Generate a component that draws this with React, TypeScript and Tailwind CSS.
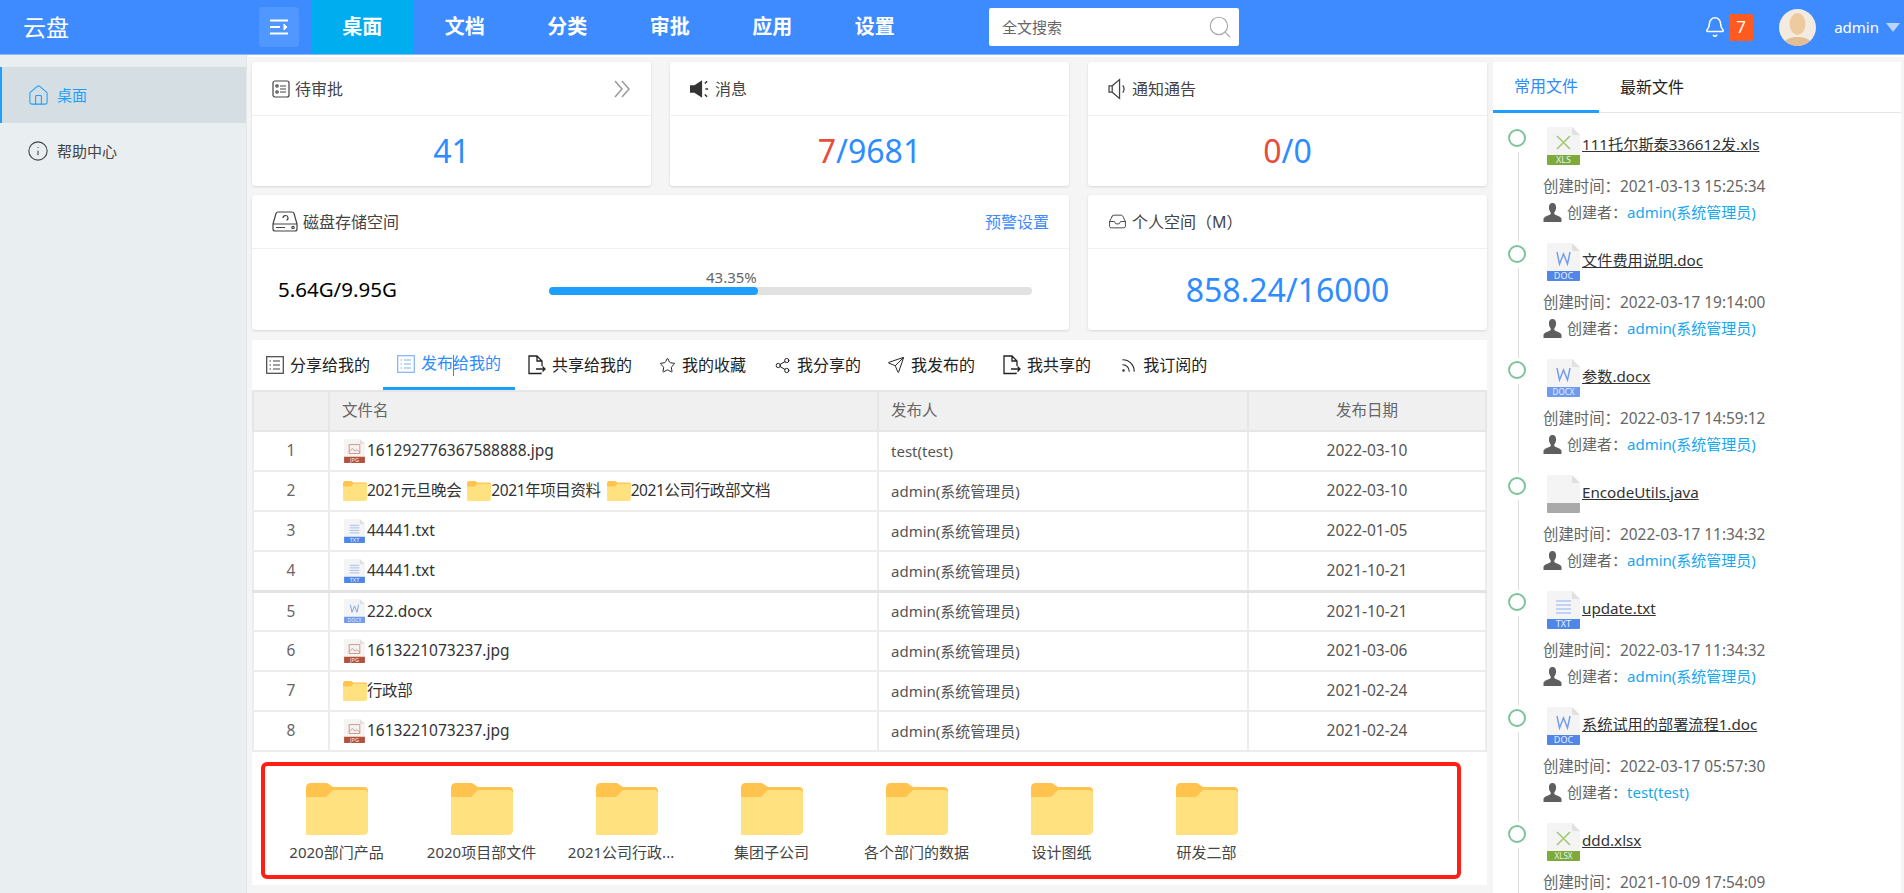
import { Bell, Home, Inbox, Info, Rss, Search, Send, Share2, Star } from 'lucide-react';

function ListIcon({ className = '' }: { className?: string }) {
  return (
    <svg viewBox="0 0 18 18" className={`w-[18px] h-[18px] shrink-0 ${className}`} fill="none" stroke="currentColor">
      <rect x="0.7" y="0.7" width="16.6" height="16.6" strokeWidth="1.2" />
      <path d="M7 5h7M7 9h7M7 13h7M3.500 5h1.500M3.500 9h1.500M3.500 13h1.500" strokeWidth="1.1" />
    </svg>
  );
}

function ExportIcon() {
  return (
    <svg viewBox="0 0 18 20" className="w-[18px] h-[20px] shrink-0" fill="none" stroke="currentColor" strokeWidth="1.3">
      <path d="M13 17.500v1H1V1h8l5 5v5M9 1v5h5M8 14h9M14.500 11.500 17 14l-2.500 2.500" />
    </svg>
  );
}

function ApprovalIcon() {
  return (
    <svg viewBox="0 0 18 18" className="w-[18px] h-[18px] shrink-0" fill="none" stroke="#444" strokeWidth="1.2">
      <rect x="1" y="1" width="16" height="16" rx="2" />
      <circle cx="5" cy="6" r="1.200" />
      <circle cx="5" cy="12" r="1.200" />
      <path d="M8 6h6M8 12h6M8 9h6" />
    </svg>
  );
}

function SpeakerFilled() {
  return (
    <svg viewBox="0 0 20 18" className="w-[22px] h-[20px] -mr-[2px] shrink-0" fill="#333">
      <path d="M0 5.500h4L11 1v16l-7-4.500H0z" />
      <path d="M13.500 4l2-2M13.500 14l2 2M14 9h2.500" stroke="#333" strokeWidth="1.400" />
    </svg>
  );
}

function SpeakerOutline() {
  return (
    <svg viewBox="0 0 20 20" className="w-[21px] h-[22px] -mr-[2px] shrink-0" fill="none" stroke="#444" strokeWidth="1.200">
      <path d="M1 7h3l7-6v18l-7-6H1zM4 7v6M14 6.500c1.500 2 1.500 5 0 7" />
    </svg>
  );
}

function DiskIcon() {
  return (
    <svg viewBox="0 0 26 21" className="w-[26px] h-[21px] shrink-0" fill="none" stroke="#444" strokeWidth="1.200">
      <path d="M1 13 4 2.500Q4.500 1 6 1h14q1.500 0 2 1.500L25 13M1 13v5q0 2 2 2h20q2 0 2-2v-5z" />
      <path d="M11 7a2.500 2.500 0 1 1 3.500 2.300M4 16.500h9" />
      <circle cx="21" cy="16.500" r="1.200" />
    </svg>
  );
}

function UserIcon() {
  return (
    <svg viewBox="0 0 19 19" className="w-[19px] h-[19px] shrink-0" fill="#5f5f5f">
      <path d="M9.500 0c2.500 0 3.600 2 3.600 4.500 0 2-.8 3.700-1.600 4.700-.5.700-.3 1.800.4 2.300 1.500 1 6.600 2 6.600 4.500V19H.500v-2.900c0-2.500 5.100-3.500 6.600-4.500.7-.5.900-1.600.4-2.300-.8-1-1.600-2.700-1.600-4.700C5.900 2 7 0 9.500 0z" />
    </svg>
  );
}

function Folder({ className }: { className: string }) {
  return (
    <svg viewBox="0 0 62 52" className={`shrink-0 ${className}`}>
      <path d="M0 5Q0 0 5 0H21L27 4H58Q62 4 62 8V20H0z" fill="#ffc34e" />
      <path d="M0 14H20L27 7H58Q62 7 62 11V47Q62 52 57 52H0z" fill="#ffe27f" />
    </svg>
  );
}

type FileKind = 'xls' | 'xlsx' | 'doc' | 'docx' | 'txt' | 'jpg' | 'java';

const bandColor: Record<FileKind, string> = {
  xls: '#7cab3b',
  xlsx: '#7cab3b',
  doc: '#5285e5',
  docx: '#6f9bee',
  txt: '#4f87e8',
  jpg: '#b5513c',
  java: '#aaaaaa',
};

function FileIcon({ kind, className }: { kind: FileKind; className: string }) {
  return (
    <svg viewBox="0 0 33 38" className={`shrink-0 ${className}`}>
      <path d="M1 0H25L33 8V37Q33 38 32 38H1Q0 38 0 37V1Q0 0 1 0z" fill="#f4f4f4" />
      <path d="M25 0L33 8H26Q25 8 25 7z" fill="#e0e0e0" />
      <path d="M0 28H33V37Q33 38 32 38H1Q0 38 0 37z" fill={bandColor[kind]} />
      {(kind === 'xls' || kind === 'xlsx') && <path d="M10 9l13 13M23 9 10 22" stroke="#a3c974" strokeWidth="1.600" />}
      {(kind === 'doc' || kind === 'docx') && <path d="M10 9l2.500 12L16.500 11l4 10L23 9" stroke="#6f9bee" strokeWidth="1.400" fill="none" />}
      {kind === 'txt' && <path d="M9 10h15M9 14h15M9 18h15M9 22h15" stroke="#8fb0ee" strokeWidth="1.200" />}
      {kind === 'jpg' && (
        <g fill="none" stroke="#d07a66" strokeWidth="1.200">
          <rect x="8" y="9" width="17" height="14" />
          <path d="M8 20l5-5 4 4 3-2 5 4" />
        </g>
      )}
      {kind !== 'java' && (
        <text x="16.500" y="36" textAnchor="middle" fontSize={kind === 'docx' || kind === 'xlsx' ? 8 : 9} fill="#e9eef7" fontFamily="Noto Sans">
          {kind.toUpperCase()}
        </text>
      )}
    </svg>
  );
}

const navItems = ['桌面', '文档', '分类', '审批', '应用', '设置'];

const tabs = [
  { label: '我的收藏', cls: 'pl-[14px] pr-[14px]', icon: <Star className="w-[17px] h-[17px]" strokeWidth={1.4} /> },
  { label: '我分享的', cls: 'pl-[14px] pr-[13px]', icon: <Share2 className="w-[17px] h-[17px]" strokeWidth={1.4} /> },
  { label: '我发布的', cls: 'pl-[13px] pr-[14px]', icon: <Send className="w-[18px] h-[18px]" strokeWidth={1.300} /> },
  { label: '我共享的', cls: 'pl-[14px] pr-[15px]', icon: <ExportIcon /> },
  { label: '我订阅的', cls: 'pl-[14px] pr-[13px]', icon: <Rss className="w-[17px] h-[17px]" strokeWidth={1.500} /> },
];

const rows: { no: number; files: { name: string; kind: FileKind | 'folder' }[]; who: string; date: string }[] = [
  { no: 1, files: [{ name: '161292776367588888.jpg', kind: 'jpg' }], who: 'test(test)', date: '2022-03-10' },
  {
    no: 2,
    files: [
      { name: '2021元旦晚会', kind: 'folder' },
      { name: '2021年项目资料', kind: 'folder' },
      { name: '2021公司行政部文档', kind: 'folder' },
    ],
    who: 'admin(系统管理员)',
    date: '2022-03-10',
  },
  { no: 3, files: [{ name: '44441.txt', kind: 'txt' }], who: 'admin(系统管理员)', date: '2022-01-05' },
  { no: 4, files: [{ name: '44441.txt', kind: 'txt' }], who: 'admin(系统管理员)', date: '2021-10-21' },
  { no: 5, files: [{ name: '222.docx', kind: 'docx' }], who: 'admin(系统管理员)', date: '2021-10-21' },
  { no: 6, files: [{ name: '1613221073237.jpg', kind: 'jpg' }], who: 'admin(系统管理员)', date: '2021-03-06' },
  { no: 7, files: [{ name: '行政部', kind: 'folder' }], who: 'admin(系统管理员)', date: '2021-02-24' },
  { no: 8, files: [{ name: '1613221073237.jpg', kind: 'jpg' }], who: 'admin(系统管理员)', date: '2021-02-24' },
];

const folders = ['2020部门产品', '2020项目部文件', '2021公司行政...', '集团子公司', '各个部门的数据', '设计图纸', '研发二部'];

const timeline: { name: string; kind: FileKind; time: string; who: string }[] = [
  { name: '111托尔斯泰336612发.xls', kind: 'xls', time: '2021-03-13 15:25:34', who: 'admin(系统管理员)' },
  { name: '文件费用说明.doc', kind: 'doc', time: '2022-03-17 19:14:00', who: 'admin(系统管理员)' },
  { name: '参数.docx', kind: 'docx', time: '2022-03-17 14:59:12', who: 'admin(系统管理员)' },
  { name: 'EncodeUtils.java', kind: 'java', time: '2022-03-17 11:34:32', who: 'admin(系统管理员)' },
  { name: 'update.txt', kind: 'txt', time: '2022-03-17 11:34:32', who: 'admin(系统管理员)' },
  { name: '系统试用的部署流程1.doc', kind: 'doc', time: '2022-03-17 05:57:30', who: 'test(test)' },
  { name: 'ddd.xlsx', kind: 'xlsx', time: '2021-10-09 17:54:09', who: 'admin(系统管理员)' },
];

function CardHead({ icon, title, right }: { icon: React.ReactNode; title: string; right?: React.ReactNode }) {
  return (
    <div className="h-[54px] flex items-center gap-[5px] px-[20px] border-b border-[#f0f0f0] text-[16px] text-[#444]">
      {icon}
      <span>{title}</span>
      {right && <div className="ml-auto">{right}</div>}
    </div>
  );
}

export default function App() {
  return (
    <div className="h-screen overflow-hidden flex flex-col bg-[#f5f5f5] font-['Noto_Sans','Noto_Sans_CJK_SC',sans-serif]">
      <header className="h-[55px] shrink-0 flex items-center bg-[#3d8bff] border-b border-[#8ab8ff] text-white">
        <div className="w-[259px] pl-[23px] text-[23px]">云盘</div>
        <button className="w-[40px] h-[40px] rounded bg-white/10 flex items-center justify-center">
          <svg viewBox="0 0 18 16" className="w-[18px] h-[16px]" stroke="white" strokeWidth="2.200" fill="none">
            <path d="M0 1.500h18M0 8h10M0 14.500h18" />
            <path d="M14 5l3 3-3 3z" fill="white" strokeWidth="1" />
          </svg>
        </button>
        <nav className="ml-[12px] flex h-full">
          {navItems.map((item, i) => (
            <a key={item} className={`w-[102.500px] flex items-center justify-center text-[20px] font-bold ${i === 0 ? 'bg-[#00aeef]' : ''}`}>
              {item}
            </a>
          ))}
        </nav>
        <div className="ml-[63px] w-[250px] h-[38px] bg-white rounded-[2px] flex items-center pl-[13px] pr-[6px] text-[15px] text-[#666]">
          <span>全文搜索</span>
          <Search className="ml-auto w-[26px] h-[26px] text-[#aaa]" strokeWidth={1.100} />
        </div>
        <div className="ml-auto flex items-center pr-[4px]">
          <Bell className="w-[22px] h-[26px]" strokeWidth={1.700} />
          <span className="ml-[3px] w-[24px] h-[27px] rounded-[2px] bg-[#ff5a1f] flex items-center justify-center text-[17px]">7</span>
          <svg viewBox="0 0 37 37" className="ml-[26px] w-[37px] h-[37px]">
            <clipPath id="avatar-clip">
              <circle cx="18.500" cy="18.500" r="18.500" />
            </clipPath>
            <g clipPath="url(#avatar-clip)">
              <rect width="37" height="37" fill="#f3ebe0" />
              <ellipse cx="18.500" cy="15" rx="8" ry="11" fill="#eecb9f" />
              <path d="M4 37c0-7 8-9 14.500-9S33 30 33 37z" fill="#e3bd94" />
            </g>
          </svg>
          <span className="ml-[18px] text-[15px]">admin</span>
          <span className="ml-[7px] w-0 h-0 border-x-[7px] border-x-transparent border-t-[9px] border-t-[#b9d5ff]" />
        </div>
      </header>

      <div className="flex-1 flex min-h-0">
        <aside className="w-[247px] shrink-0 bg-[#e9eef0] pt-[12px] border-r border-[#e2e6e8] text-[15px]">
          <a className="h-[56px] flex items-center gap-[7px] pl-[25px] bg-[#d5dfe3] border-l-2 border-[#1e9fff] text-[#1e9fff]">
            <Home className="w-[23px] h-[23px]" strokeWidth={1.100} />
            <span>桌面</span>
          </a>
          <a className="h-[56px] flex items-center gap-[8px] pl-[27px] text-[#444]">
            <Info className="w-[22px] h-[22px]" strokeWidth={1.200} />
            <span>帮助中心</span>
          </a>
        </aside>

        <main className="flex-1 min-w-0 flex border-t-2 border-white pt-[5px] pl-[5px] pr-[3px]">
          <div className="w-[1235px] shrink-0">
            <section className="grid grid-cols-3 gap-x-[19px] gap-y-[9px]">
              <div className="h-[124px] bg-white rounded-[3px] shadow-sm">
                <CardHead
                  icon={<ApprovalIcon />}
                  title="待审批"
                  right={
                    <svg viewBox="0 0 17 18" className="w-[17px] h-[18px] mr-[0px]" fill="none" stroke="#999" strokeWidth="1.500">
                      <path d="M1 1l7 8-7 8M8 1l7 8-7 8" />
                    </svg>
                  }
                />
                <div className="h-[70px] flex items-center justify-center text-[32px] text-[#2d8cff]">41</div>
              </div>
              <div className="h-[124px] bg-white rounded-[3px] shadow-sm">
                <CardHead icon={<SpeakerFilled />} title="消息" />
                <div className="h-[70px] flex items-center justify-center text-[32px] text-[#2d8cff]">
                  <span className="text-[#e74c3c]">7</span>/9681
                </div>
              </div>
              <div className="h-[124px] bg-white rounded-[3px] shadow-sm">
                <CardHead icon={<SpeakerOutline />} title="通知通告" />
                <div className="h-[70px] flex items-center justify-center text-[32px] text-[#2d8cff]">
                  <span className="text-[#e74c3c]">0</span>/0
                </div>
              </div>
              <div className="col-span-2 h-[135px] bg-white rounded-[3px] shadow-sm">
                <CardHead icon={<DiskIcon />} title="磁盘存储空间" right={<a className="text-[#3d8bff]">预警设置</a>} />
                <div className="h-[81px] flex items-center pl-[26px]">
                  <div className="w-[271px] text-[20.500px] text-black">5.64G/9.95G</div>
                  <div className="w-[483px] pb-[18px]">
                    <div className="pl-[157px] text-[15px] leading-[20px] text-[#666]">43.35%</div>
                    <div className="h-[8px] rounded-full bg-[#e2e2e2]">
                      <div className="h-full rounded-full bg-[#1e9fff]" style={{ width: '43.35%' }} />
                    </div>
                  </div>
                </div>
              </div>
              <div className="h-[135px] bg-white rounded-[3px] shadow-sm">
                <CardHead icon={<Inbox className="w-[19px] h-[19px] text-[#444]" strokeWidth={1.200} />} title="个人空间（M）" />
                <div className="h-[81px] flex items-center justify-center text-[32px] text-[#2d8cff]">858.24/16000</div>
              </div>
            </section>

            <section className="mt-[10px] bg-white h-[545px]">
              <div className="h-[50px] flex text-[16px] text-[#222]">
                <a className="pl-[14px] pr-[13px] flex items-center gap-[6px]">
                  <ListIcon className="text-[#444]" />
                  <span>分享给我的</span>
                </a>
                <a className="px-[14px] flex items-center gap-[6px] border-b-[3px] border-[#1e9fff] text-[#2d8cff]">
                  <ListIcon className="text-[#7fb2f5]" />
                  <span>
                    发布<i className="inline-block w-px h-[21px] -mr-px align-middle bg-[#2d8cff]" />给我的
                  </span>
                </a>
                <a className="px-[13px] flex items-center gap-[6px]">
                  <ExportIcon />
                  <span>共享给我的</span>
                </a>
                {tabs.map((tab) => (
                  <a key={tab.label} className={`${tab.cls} flex items-center gap-[6px]`}>
                    {tab.icon}
                    <span>{tab.label}</span>
                  </a>
                ))}
              </div>
              <table className="w-full table-fixed border-collapse text-[15.500px]">
                <colgroup>
                  <col className="w-[76px]" />
                  <col className="w-[549px]" />
                  <col className="w-[370px]" />
                  <col />
                </colgroup>
                <thead>
                  <tr className="h-[40px] bg-[#f0f0f0] text-[#666]">
                    <th className="border-2 border-[#e6e6e6] font-normal" />
                    <th className="border-2 border-[#e6e6e6] font-normal text-left pl-[12px]">文件名</th>
                    <th className="border-2 border-[#e6e6e6] font-normal text-left pl-[12px]">发布人</th>
                    <th className="border-2 border-[#e6e6e6] font-normal">发布日期</th>
                  </tr>
                </thead>
                <tbody>
                  {rows.map((row) => (
                    <tr key={row.no} className={`h-[40px] ${row.no === 4 ? 'border-b-[3px] border-[#e3e3e3]' : ''}`}>
                      <td className="border-2 border-[#ececec] text-center text-[#666]">{row.no}</td>
                      <td className="border-2 border-[#ececec] pl-[13px] text-[#333]">
                        <div className="flex items-center gap-[6px]">
                          {row.files.map((file) => (
                            <div key={file.name} className="flex items-center">
                              {file.kind === 'folder' ? (
                                <Folder className="w-[24px] h-[20px]" />
                              ) : (
                                <FileIcon kind={file.kind} className="w-[21px] h-[24px] ml-[1px] mr-[2px]" />
                              )}
                              <span className={file.kind === 'folder' ? 'tracking-[-0.4px]' : ''}>{file.name}</span>
                            </div>
                          ))}
                        </div>
                      </td>
                      <td className="border-2 border-[#ececec] pl-[12px] text-[15px] text-[#555]">{row.who}</td>
                      <td className="border-2 border-[#ececec] text-center text-[#555]">{row.date}</td>
                    </tr>
                  ))}
                </tbody>
              </table>
              <div className="mt-[10px] ml-[9px] w-[1200px] h-[117px] border-[4px] border-[#ff1f14] rounded-[6px] pt-[17px] flex text-[15px] text-[#444]">
                {folders.map((name) => (
                  <div key={name} className="w-[145px] -ml-px mr-px flex flex-col items-center">
                    <Folder className="w-[62px] h-[52px]" />
                    <div className={`mt-[6px] leading-[22px] ${name.endsWith('...') ? 'pr-[11px]' : ''}`}>{name}</div>
                  </div>
                ))}
              </div>
            </section>
          </div>

          <aside className="ml-[6px] flex-1 min-w-0 bg-white">
            <div className="h-[51px] flex border-b border-[#e6e6e6] text-[16px]">
              <a className="w-[106px] flex items-center justify-center border-b-[3px] border-[#1e9fff] text-[#2d8cff] -mb-px">常用文件</a>
              <a className="ml-[21px] flex items-center text-[#222]">最新文件</a>
            </div>
            <ul className="pt-[16px] pl-[15px]">
              {timeline.map((item) => (
                <li key={item.name + item.time} className="h-[116px] flex gap-[17px]">
                  <div className="w-[18px] shrink-0 flex flex-col items-center">
                    <span className="w-[18px] h-[18px] rounded-full border-2 border-[#7dc598]" />
                    <span className="mt-[5px] mb-[3px] ml-[2px] flex-1 w-px bg-[#ddd]" />
                  </div>
                  <div>
                    <div className="-mt-[2px] ml-[4px] flex items-center gap-[2px]">
                      <FileIcon kind={item.kind} className="w-[33px] h-[38px]" />
                      <a className="mb-[4px] text-[15.200px] text-[#333] underline">{item.name}</a>
                    </div>
                    <div className="mt-[9px] leading-[26px] text-[15.400px] text-[#666]">创建时间：{item.time}</div>
                    <div className="-mt-px leading-[26px] flex items-center gap-[5px] text-[15px] text-[#666]">
                      <UserIcon />
                      <span>
                        创建者：<a className="text-[#16a7f0]">{item.who}</a>
                      </span>
                    </div>
                  </div>
                </li>
              ))}
            </ul>
          </aside>
        </main>
      </div>
    </div>
  );
}
